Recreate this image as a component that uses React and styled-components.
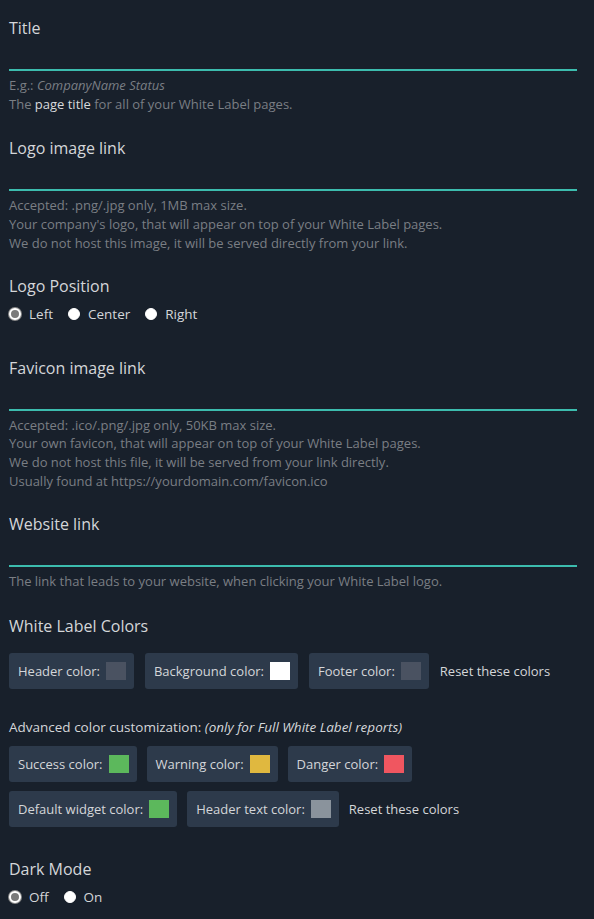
import React from 'react';
import styled, { createGlobalStyle } from 'styled-components';

const Global = createGlobalStyle`
  html, body { margin: 0; padding: 0; background: #18202b; }
  body { font-family: "Open Sans", "Noto Sans", sans-serif; }
`;

const Page = styled.div`
  width: 594px;
  min-height: 919px;
  background: #18202b;
  padding: 16px 17px 0 9px;
  box-sizing: border-box;
  color: #d4d6d9;
`;

const Section = styled.div`
  margin-bottom: ${p => p.gap || 22}px;
`;

const Label = styled.div`
  font-size: 16px;
  line-height: 24px;
  color: #d4d6d9;
`;

const Input = styled.div`
  height: 29px;
  border-bottom: 2px solid #3cbcae;
`;

const Help = styled.div`
  margin-top: 5px;
  font-size: 13px;
  line-height: 18.7px;
  color: #7a7e84;
  b { color: #d8dadc; font-weight: 400; }
  em { font-style: italic; }
`;

const RadioRow = styled.div`
  display: flex;
  gap: 15px;
  margin-top: 6px;
  font-size: 13.5px;
  line-height: 20px;
`;

const RadioItem = styled.label`
  display: flex;
  align-items: center;
  gap: 8px;
  color: #d4d6d9;
`;

const Dot = styled.span`
  width: 12px;
  height: 12px;
  border-radius: 50%;
  box-sizing: border-box;
  background: ${p => (p.on ? '#7a7a7a' : '#ffffff')};
  border: ${p => (p.on ? '2px solid #ffffff' : '1px solid #ffffff')};
  box-shadow: ${p => (p.on ? '0 0 0 1px #8a8a8a' : 'none')};
`;

const ColorRow = styled.div`
  display: flex;
  align-items: center;
  gap: ${p => p.gap || 10}px;
  margin-top: ${p => p.top || 0}px;
`;

const ColorBtn = styled.div`
  display: flex;
  align-items: center;
  gap: 6px;
  height: 36px;
  padding: 0 8px 0 9px;
  background: #2d3a4b;
  border-radius: 3px;
  font-size: 13px;
  color: #d4d6d9;
`;

const Swatch = styled.span`
  width: 20px;
  height: 18px;
  background: ${p => p.color};
`;

const Reset = styled.span`
  font-size: 13px;
  color: #d4d6d9;
`;

const Advanced = styled.div`
  font-size: 13.5px;
  line-height: 20px;
  margin: 28px 0 9px;
  em { font-style: italic; }
`;

const Field = ({ label, gap, children }) => (
  <Section gap={gap}>
    <Label>{label}</Label>
    <Input />
    <Help>{children}</Help>
  </Section>
);

const Radios = ({ options, value }) => (
  <RadioRow>
    {options.map(o => (
      <RadioItem key={o}>
        <Dot on={o === value} />
        {o}
      </RadioItem>
    ))}
  </RadioRow>
);

const Color = ({ label, color }) => (
  <ColorBtn>
    {label}
    <Swatch color={color} />
  </ColorBtn>
);

export default function App() {
  return (
    <>
      <Global />
      <Page>
        <Field label="Title" gap={23}>
          E.g.: <em>CompanyName Status</em>
          <br />
          The <b>page title</b> for all of your White Label pages.
        </Field>
        <Field label="Logo image link" gap={21}>
          Accepted: .png/.jpg only, 1MB max size.
          <br />
          Your company's logo, that will appear on top of your White Label pages.
          <br />
          We do not host this image, it will be served directly from your link.
        </Field>
        <Section gap={32}>
          <Label>Logo Position</Label>
          <Radios options={['Left', 'Center', 'Right']} value="Left" />
        </Section>
        <Field label="Favicon image link">
          Accepted: .ico/.png/.jpg only, 50KB max size.
          <br />
          Your own favicon, that will appear on top of your White Label pages.
          <br />
          We do not host this file, it will be served from your link directly.
          <br />
          Usually found at https://yourdomain.com/favicon.ico
        </Field>
        <Field label="Website link" gap={23}>
          The link that leads to your website, when clicking your White Label logo.
        </Field>
        <Section gap={30}>
          <Label>White Label Colors</Label>
          <ColorRow top={15} gap={11}>
            <Color label="Header color:" color="#4a5261" />
            <Color label="Background color:" color="#ffffff" />
            <Color label="Footer color:" color="#4a5261" />
            <Reset>Reset these colors</Reset>
          </ColorRow>
          <Advanced>
            Advanced color customization: <em>(only for Full White Label reports)</em>
          </Advanced>
          <ColorRow>
            <Color label="Success color:" color="#5cb85c" />
            <Color label="Warning color:" color="#e0b83f" />
            <Color label="Danger color:" color="#f05660" />
          </ColorRow>
          <ColorRow top={9}>
            <Color label="Default widget color:" color="#5cb85c" />
            <Color label="Header text color:" color="#8a939c" />
            <Reset>Reset these colors</Reset>
          </ColorRow>
        </Section>
        <Section>
          <Label>Dark Mode</Label>
          <Radios options={['Off', 'On']} value="Off" />
        </Section>
      </Page>
    </>
  );
}
